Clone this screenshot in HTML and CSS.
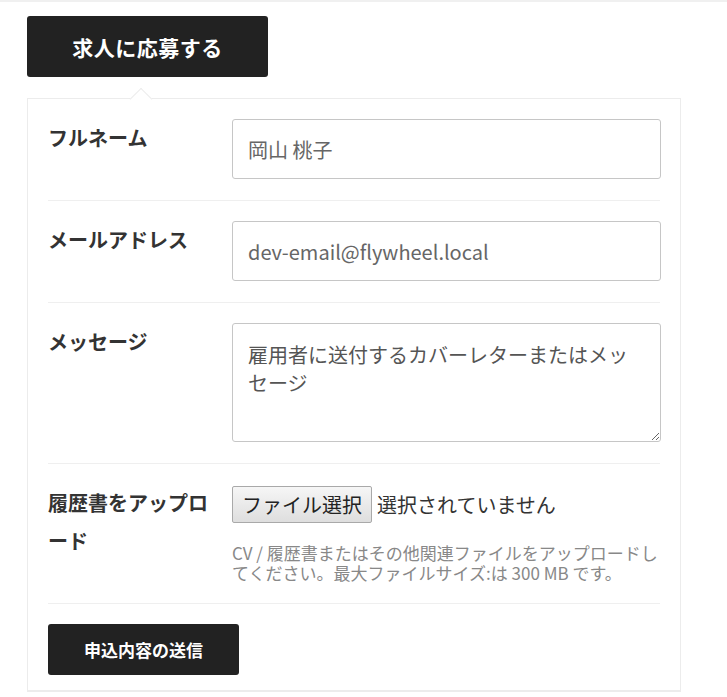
FILE: index.html
```html
<!DOCTYPE html>
<html lang="ja">
<head>
<meta charset="utf-8">
<title>求人に応募する</title>
<link rel="stylesheet" href="styles.css">
</head>
<body>
<div class="topline"></div>
<div class="wrap">
  <div class="title-btn">求人に応募する</div>
  <form class="card">
    <div class="row">
      <label class="label">フルネーム</label>
      <div class="field"><input class="input" type="text" value="岡山 桃子"></div>
    </div>
    <div class="row">
      <label class="label">メールアドレス</label>
      <div class="field"><input class="input" type="text" value="dev-email@flywheel.local"></div>
    </div>
    <div class="row">
      <label class="label">メッセージ</label>
      <div class="field"><textarea class="textarea">雇用者に送付するカバーレターまたはメッセージ</textarea></div>
    </div>
    <div class="row">
      <label class="label">履歴書をアップロード</label>
      <div class="field">
        <div class="file-line"><span class="file-btn">ファイル選択</span><span class="file-name">選択されていません</span></div>
        <p class="help">CV / 履歴書またはその他関連ファイルをアップロードしてください。最大ファイルサイズ:は 300 MB です。</p>
      </div>
    </div>
    <div class="row row-last">
      <div class="submit">申込内容の送信</div>
    </div>
  </form>
</div>
</body>
</html>
```

FILE: styles.css
```css
html, body {
  margin: 0;
  padding: 0;
  background: #fff;
}
body {
  font-family: "Noto Sans CJK JP", "Noto Sans", sans-serif;
  color: #333;
}
.topline {
  height: 2px;
  background: #f0f0f0;
}
.wrap {
  padding: 14px 0 0 27px;
}
.title-btn {
  width: 241px;
  height: 61px;
  background: #222;
  border-radius: 3px;
  color: #fff;
  font-weight: bold;
  font-size: 21px;
  display: flex;
  align-items: center;
  justify-content: center;
  letter-spacing: 0.5px;
}
.card {
  position: relative;
  margin: 21px 0 0;
  width: 612px;
  padding: 0 20px;
  border: 1px solid #ececec;
  border-bottom-width: 2px;
  background: #fff;
  display: block;
}
.card::before {
  content: "";
  position: absolute;
  top: -8.5px;
  left: 104.5px;
  width: 15px;
  height: 15px;
  background: #fff;
  border-left: 1px solid #ececec;
  border-top: 1px solid #ececec;
  transform: rotate(45deg);
}
.row {
  display: grid;
  grid-template-columns: 164px 429px;
  column-gap: 20px;
  padding: 20px 0 21px;
  border-bottom: 1px solid #efefef;
}
.row-last {
  display: block;
  border-bottom: none;
  padding-bottom: 15px;
}
.label {
  font-size: 20px;
  font-weight: bold;
  line-height: 38px;
  color: #333;
}
.field {
  min-width: 0;
}
.input {
  box-sizing: border-box;
  display: block;
  width: 429px;
  height: 60px;
  margin: 0;
  padding: 0 15px;
  border: 1px solid #c6c6c6;
  border-radius: 3px;
  font-family: "Noto Sans CJK JP", "Noto Sans", sans-serif;
  font-size: 20px;
  color: #666;
  background: #fff;
  outline: none;
}
.textarea {
  box-sizing: border-box;
  display: block;
  width: 429px;
  height: 119px;
  margin: 0;
  padding: 17px 15px;
  border: 1px solid #c6c6c6;
  border-radius: 3px;
  font-family: "Noto Sans CJK JP", "Noto Sans", sans-serif;
  font-size: 20px;
  line-height: 28px;
  color: #555;
  background: #fff;
  resize: both;
  outline: none;
}
.file-line {
  display: flex;
  align-items: center;
  margin-top: 2px;
  height: 37px;
}
.file-btn {
  box-sizing: border-box;
  height: 37px;
  width: 140px;
  display: flex;
  align-items: center;
  justify-content: center;
  border: 1px solid #a9a9a9;
  border-radius: 2px;
  background: linear-gradient(#f6f6f6, #dedede);
  font-size: 20px;
  color: #222;
}
.file-name {
  margin-left: 5px;
  font-size: 20px;
  color: #333;
}
.help {
  margin: 20px 0 0;
  font-size: 17px;
  line-height: 19.5px;
  color: #888;
}
.submit {
  width: 191px;
  height: 51px;
  background: #222;
  border-radius: 3px;
  color: #fff;
  font-weight: bold;
  font-size: 17px;
  display: flex;
  align-items: center;
  justify-content: center;
}
```
